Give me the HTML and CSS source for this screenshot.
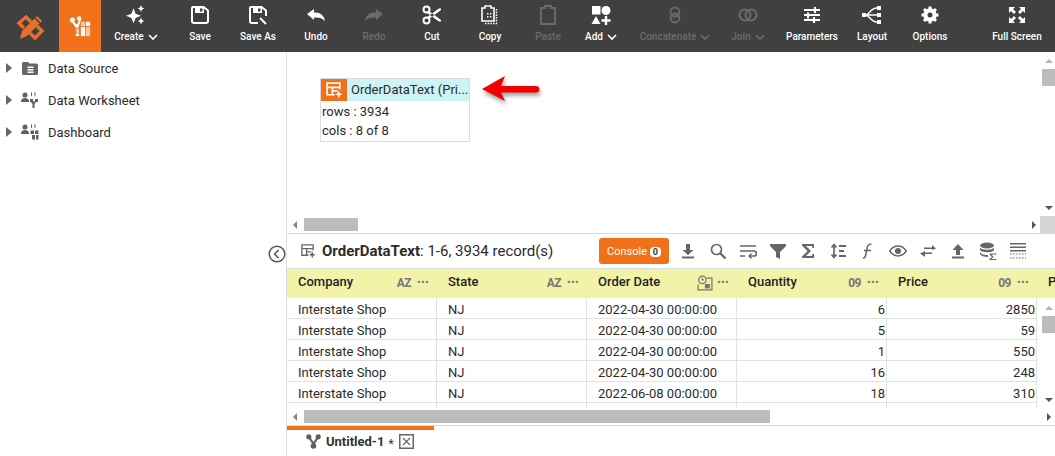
FILE: index.html
```html
<!DOCTYPE html>
<html lang="en">
<head>
    <meta charset="UTF-8">
    <title>Data Worksheet</title>
    <link rel="stylesheet" href="styles.css">
</head>
<body>
    <header class="topbar">
        <div class="logo">
            <svg width="38" height="38" viewBox="0 0 38 38"><g fill="none" stroke="#e8702a" stroke-width="3.4"><path d="M13 21l-5-5 7-6 5 5"/><path d="M19 26l5 5 7-7-5-5"/></g><path d="M9 32l2-8L26 9l5 5-15 15z" fill="#e8702a"/><path d="M24 11l5 5" stroke="#404040" stroke-width="1.5"/></svg>
        </div>
        <div class="tab-active">
            <svg width="22" height="22" viewBox="0 0 26 26"><g fill="#fff"><circle cx="4" cy="6" r="3"/><circle cx="12" cy="4" r="2.6"/><path d="M3 8l5 7h3l3-9-2-1-2 6H9L5 7z"/><rect x="8" y="16" width="4" height="5" fill="#f5c9a0"/><rect x="8" y="22" width="4" height="3"/><rect x="14" y="8" width="5" height="5" fill="#f5c9a0"/><rect x="20" y="8" width="5" height="5"/><rect x="14" y="14" width="5" height="11"/><rect x="20" y="14" width="5" height="11" fill="#f5c9a0"/></g></svg>
        </div>
        <div class="tool w70">
            <svg width="20" height="20" viewBox="0 0 24 24" fill="#fff"><path d="M9 4l2.500 6.500L18 13l-6.500 2.500L9 22l-2.500-6.500L0 13l6.500-2.500z"/><path d="M18 0l1.200 3 2.800 1.200-2.800 1.200L18 8.500l-1.200-3.100L14 4.200 16.800 3z"/><path d="M18 15l1.300 3 2.700 1.200-2.700 1.300-1.300 3-1.200-3-2.800-1.300 2.800-1.200z"/></svg>
            <span class="tool-label">Create <svg class="chev" width="10" height="7" viewBox="0 0 10 7"><path d="M1 1l4 4 4-4" fill="none" stroke="#fff" stroke-width="1.600"/></svg></span>
        </div>
        <div class="tool w58">
            <svg width="20" height="20" viewBox="0 0 20 20"><path d="M3 2h10.500L18 5.500V16a2 2 0 0 1-2 2H4a2 2 0 0 1-2-2V3a1 1 0 0 1 1-1z" fill="none" stroke="#fff" stroke-width="2"/><path d="M5 3h9v5H5z" fill="#fff"/><rect x="10" y="3.500" width="2.500" height="3" fill="#404040"/></svg>
            <span class="tool-label">Save</span>
        </div>
        <div class="tool w58">
            <svg width="20" height="20" viewBox="0 0 20 20"><path d="M10 18H4a2 2 0 0 1-2-2V3a1 1 0 0 1 1-1h10.500L18 5.500V11" fill="none" stroke="#fff" stroke-width="2"/><path d="M5 3h9v5H5z" fill="#fff"/><rect x="10" y="3.500" width="2.500" height="3" fill="#404040"/><path d="M12 13l6 6" stroke="#fff" stroke-width="2"/></svg>
            <span class="tool-label">Save As</span>
        </div>
        <div class="tool w58">
            <svg width="20" height="20" viewBox="0 0 20 20"><path d="M1 9l7-5v3.500c6-.5 10 2.500 11 8.500-3-3-6-4-11-3.500V15z" fill="#fff"/></svg>
            <span class="tool-label">Undo</span>
        </div>
        <div class="tool w58 off">
            <svg width="20" height="20" viewBox="0 0 20 20"><path d="M19 9l-7-5v3.500C6 7 2 10 1 16c3-3 6-4 11-3.500V15z" fill="#6b6b6b"/></svg>
            <span class="tool-label">Redo</span>
        </div>
        <div class="tool w58">
            <svg width="20" height="20" viewBox="0 0 20 20"><g fill="none" stroke="#fff" stroke-width="2"><circle cx="4.500" cy="4.500" r="3"/><circle cx="4.500" cy="15.500" r="3"/></g><path d="M7 6l12 9v1.500h-2L5 8zM7 14L19 5v-1.500h-2L5 12z" fill="#fff"/></svg>
            <span class="tool-label">Cut</span>
        </div>
        <div class="tool w58">
            <svg width="20" height="20" viewBox="0 0 20 20"><path d="M14 16H2V3h3V1h6v2h3z" fill="none" stroke="#fff" stroke-width="1.600"/><path d="M7 8h1.500v1.500H7zM10 8h1.500v1.500H10zM7 11h1.500v1.500H7zM10 11h1.500v1.500H10z" fill="#fff"/><path d="M16.500 4v14M5 18.500h12" stroke="#fff" stroke-width="1.500" stroke-dasharray="1.500 1.200"/></svg>
            <span class="tool-label">Copy</span>
        </div>
        <div class="tool w58 off">
            <svg width="20" height="20" viewBox="0 0 20 20"><path d="M17 19H3V3h4V1h6v2h4z" fill="none" stroke="#6b6b6b" stroke-width="1.800"/></svg>
            <span class="tool-label">Paste</span>
        </div>
        <div class="tool w48">
            <svg width="20" height="20" viewBox="0 0 20 20" fill="#fff"><rect x="1" y="1" width="8.500" height="8.500"/><circle cx="15" cy="5.500" r="4.500"/><path d="M5 11l4.500 8h-9z"/><path d="M13.800 11h2.400v3.300h3.300v2.400h-3.300V20h-2.400v-3.300h-3.300v-2.400h3.300z"/></svg>
            <span class="tool-label">Add <svg class="chev" width="10" height="7" viewBox="0 0 10 7"><path d="M1 1l4 4 4-4" fill="none" stroke="#fff" stroke-width="1.600"/></svg></span>
        </div>
        <div class="tool w100 off">
            <svg width="20" height="20" viewBox="0 0 20 20" fill="none" stroke="#6b6b6b" stroke-width="1.800"><circle cx="10" cy="7" r="4.500"/><circle cx="10" cy="13" r="4.500"/></svg>
            <span class="tool-label">Concatenate <svg class="chev" width="10" height="7" viewBox="0 0 10 7"><path d="M1 1l4 4 4-4" fill="none" stroke="#6b6b6b" stroke-width="1.600"/></svg></span>
        </div>
        <div class="tool w46 off">
            <svg width="20" height="20" viewBox="0 0 20 20" fill="none" stroke="#6b6b6b" stroke-width="2"><circle cx="7" cy="10" r="5.500"/><circle cx="13" cy="10" r="5.500"/></svg>
            <span class="tool-label">Join <svg class="chev" width="10" height="7" viewBox="0 0 10 7"><path d="M1 1l4 4 4-4" fill="none" stroke="#6b6b6b" stroke-width="1.600"/></svg></span>
        </div>
        <div class="tool w82">
            <svg width="20" height="20" viewBox="0 0 20 20"><path d="M2 5h16M2 10h16M2 15h16" stroke="#fff" stroke-width="1.800"/><path d="M13 2v6M6 7.500v6M12 12v6" stroke="#fff" stroke-width="2.200"/></svg>
            <span class="tool-label">Parameters</span>
        </div>
        <div class="tool w38">
            <svg width="20" height="20" viewBox="0 0 20 20"><g fill="#fff"><rect x="0" y="8" width="4" height="4"/><rect x="15" y="1" width="4" height="4"/><rect x="15" y="8" width="4" height="4"/><rect x="15" y="15" width="4" height="4"/></g><path d="M3 10c5 0 5-7 12-7M3 10h12M3 10c5 0 5 7 12 7" fill="none" stroke="#fff" stroke-width="1.400"/></svg>
            <span class="tool-label">Layout</span>
        </div>
        <div class="tool w78">
            <svg width="20" height="20" viewBox="0 0 20 20"><circle cx="10" cy="10" r="4.500" fill="none" stroke="#fff" stroke-width="4.500"/><path d="M10 1.500v17M1.500 10h17M4 4l12 12M16 4L4 16" stroke="#fff" stroke-width="3"/><circle cx="10" cy="10" r="2.500" fill="#404040"/></svg>
            <span class="tool-label">Options</span>
        </div>
        <div class="tool w76 full">
            <svg width="20" height="20" viewBox="0 0 20 20" fill="#fff"><path d="M2 2h6L6 4l3 3-2 2-3-3-2 2zM18 2v6l-2-2-3 3-2-2 3-3-2-2zM2 18v-6l2 2 3-3 2 2-3 3 2 2zM18 18h-6l2-2-3-3 2-2 3 3 2-2z"/></svg>
            <span class="tool-label">Full Screen</span>
        </div>
    </header>

    <div class="page">
        <aside class="sidebar">
            <div class="tree-row">
                <span class="caret"></span>
                <svg width="18" height="15" viewBox="0 0 18 15"><path d="M1 2.500A1.500 1.500 0 0 1 2.500 1H7l1.500 1.500h7A1.500 1.500 0 0 1 17 4v8.500a1.500 1.500 0 0 1-1.500 1.500h-13A1.500 1.500 0 0 1 1 12.500z" fill="#666"/><path d="M6.500 5.500h6v1.500h-6zM6.500 8h6v1.500h-6zM6.500 10.500h6V12h-6z" fill="#fff"/></svg>
                <span class="tree-label">Data Source</span>
            </div>
            <div class="tree-row">
                <span class="caret"></span>
                <svg width="18" height="16" viewBox="0 0 18 16" fill="#5f5f5f"><circle cx="4" cy="3" r="2.500"/><path d="M0 10c0-3 1.500-4 4-4s4 1 4 4z"/><path d="M10 0c1.500.5 1.500 4 0 4.500zM13.500 0c1.500.5 1.500 4 0 4.500z"/><path d="M9 7h3v2.500h2V7h3v3h-2l-1.500 2v4h-2v-4L10 10H9z"/></svg>
                <span class="tree-label">Data Worksheet</span>
            </div>
            <div class="tree-row">
                <span class="caret"></span>
                <svg width="18" height="16" viewBox="0 0 18 16" fill="#5f5f5f"><circle cx="4" cy="3" r="2.500"/><path d="M0 10c0-3 1.500-4 4-4s4 1 4 4z"/><path d="M10 0c1.500.5 1.500 4 0 4.500zM13.500 0c1.500.5 1.500 4 0 4.500z"/><path d="M9.500 6.500h3.500V10H9.500zM14 6.500h3.500V10H14zM11 11h3v4.500h-3zM15 11h2.500v4.500H15z"/></svg>
                <span class="tree-label">Dashboard</span>
            </div>
        </aside>

        <main class="main">
            <button class="collapse">
                <svg width="18" height="18" viewBox="0 0 18 18"><circle cx="9" cy="9" r="7.800" fill="#fff" stroke="#555" stroke-width="1.500"/><path d="M10.500 5L6.500 9l4 4" fill="none" stroke="#555" stroke-width="1.500"/></svg>
            </button>

            <section class="canvas">
                <div class="canvas-row">
                    <div class="canvas-area">
                        <div class="node">
                            <div class="node-head">
                                <span class="node-icon">
                                    <svg width="18" height="18" viewBox="0 0 17 17"><path d="M9 13H2V2h12v6" fill="none" stroke="#fff" stroke-width="1.500"/><path d="M2 6h12M7 6v7M7 9.500h5" stroke="#fff" stroke-width="1.500" fill="none"/><path d="M13 9l1 2.500 2.500 1-2.500 1-1 3-1-3-2.500-1 2.500-1z" fill="#fff"/></svg>
                                </span>
                                <span class="node-title">OrderDataText (Pri...</span>
                            </div>
                            <div class="node-lines">
                                <div class="node-line">rows : 3934</div>
                                <div class="node-line">cols : 8 of 8</div>
                            </div>
                        </div>
                        <svg class="red-arrow" width="66" height="32" viewBox="0 0 66 32">
                            <path d="M5 16L28 3l-4 10h35a3 3 0 0 1 0 6.500H24l4 8.500z" fill="#f20000"/>
                        </svg>
                    </div>
                    <div class="vbar">
                        <span class="arrow-up"></span>
                        <span class="vthumb thumb-top"></span>
                        <span class="vspace"></span>
                        <span class="arrow-down"></span>
                    </div>
                </div>
                <div class="hbar">
                    <span class="arrow-left"></span>
                    <span class="hthumb thumb-small"></span>
                    <span class="hspace"></span>
                    <span class="arrow-right"></span>
                    <span class="corner"></span>
                </div>
            </section>

            <section class="infobar">
                <svg class="info-icon" width="16" height="16" viewBox="0 0 17 17"><path d="M9 13H2V2h12v6" fill="none" stroke="#666" stroke-width="1.400"/><path d="M2 6h12M7 6v7M7 9.500h5" stroke="#666" stroke-width="1.400" fill="none"/><path d="M13 9l1 2.500 2.500 1-2.500 1-1 3-1-3-2.500-1 2.500-1z" fill="#666"/></svg>
                <span class="info-text"><b>OrderDataText</b>: 1-6, 3934 record(s)</span>
                <button class="console">Console <span class="console-count">0</span></button>
                <div class="actions">
                    <svg width="18" height="18" viewBox="0 0 18 18" fill="#666"><path d="M7 2h4v6h3.500L9 13 3.500 8H7z"/><rect x="3" y="14.500" width="12" height="2"/></svg>
                    <svg width="18" height="18" viewBox="0 0 18 18" fill="none" stroke="#666"><circle cx="7.500" cy="7.500" r="5" stroke-width="1.700"/><path d="M11 11l5.500 5.500" stroke-width="2.200"/></svg>
                    <svg width="18" height="18" viewBox="0 0 18 18" fill="none" stroke="#666" stroke-width="1.700"><path d="M1 4h16M1 9h14a2.500 2.500 0 0 1 0 5h-4M1 14h5"/><path d="M12.500 11.500L10 14l2.500 2.500" stroke-width="1.400"/></svg>
                    <svg width="18" height="18" viewBox="0 0 18 18" fill="#666"><path d="M1 2h16v2l-6 6v7l-4-2v-5L1 4z"/></svg>
                    <svg width="18" height="18" viewBox="0 0 18 18" fill="#666"><path d="M3 2h12v4h-1.500l-.5-2H7l5 5-5 5h6l.5-2H15v4H3v-1.500L8.500 9 3 3.500z"/></svg>
                    <svg width="18" height="18" viewBox="0 0 18 18" fill="none" stroke="#666" stroke-width="1.700"><path d="M5 3v12M2.500 5.500L5 2.500l2.500 3M2.500 12.500l2.500 3 2.500-3"/><path d="M10 4h7M10 9h5M10 14h7" stroke-width="1.900"/></svg>
                    <svg width="18" height="18" viewBox="0 0 18 18" fill="none" stroke="#666" stroke-width="1.500"><path d="M4 16c2.500 0 2.500-1.500 3.500-7s1.500-7 5-7M5 8.500h7"/></svg>
                    <svg width="18" height="18" viewBox="0 0 18 18"><path d="M0.800 9C3 5.500 6 4 9 4s6 1.500 8.200 5C15 12.500 12 14 9 14S3 12.500.800 9z" fill="none" stroke="#666" stroke-width="1.500"/><circle cx="9" cy="9" r="3" fill="#666"/></svg>
                    <svg width="18" height="18" viewBox="0 0 18 18" fill="#666"><path d="M5 5.500h8V3l4 3.500-4 1.500V7H5zM13 10.500H6V9L1 11.500 6 15v-3h7z"/></svg>
                    <svg width="18" height="18" viewBox="0 0 18 18" fill="#666"><path d="M9 2l5.500 6H11v5H7V8H3.500z"/><rect x="3" y="14.500" width="12" height="2"/></svg>
                    <svg width="18" height="18" viewBox="0 0 18 18" fill="#666"><ellipse cx="8" cy="3.500" rx="7" ry="3"/><path d="M1 5.500c1 3 13 3 14 0v2.500c-1 3-13 3-14 0zM1 10c1 2.500 5 3 8 3v2c-4 0-7-1-8-3z"/><path d="M10.500 11.500h7v1h-5l2 2.500-2 2h5v1h-7v-1l2.500-2-2.500-2.500z"/></svg>
                    <svg width="18" height="18" viewBox="0 0 18 18" fill="#666"><path d="M1 1h16v1.500H1zM1 4.500h16V6H1zM1 8h16v1.500H1z"/><path d="M1 12h16M1 16h16" stroke="#666" stroke-dasharray="1.500 1.500" fill="none"/></svg>
                </div>
            </section>

            <section class="grid">
                <div class="grid-head">
                    <div class="hcell"><span class="hname">Company</span><span class="htype">AZ</span><span class="dots">•••</span></div>
                    <div class="hcell"><span class="hname">State</span><span class="htype">AZ</span><span class="dots">•••</span></div>
                    <div class="hcell"><span class="hname">Order Date</span>
                        <svg class="htype-icon" width="16" height="16" viewBox="0 0 15 15" fill="none" stroke="#777" stroke-width="1.200"><circle cx="5" cy="4.500" r="3.500"/><path d="M5 2.500v2h1.500M9 3h5v11H1V9"/><rect x="8" y="9" width="3.500" height="3" fill="#777"/></svg>
                        <span class="dots">•••</span></div>
                    <div class="hcell"><span class="hname">Quantity</span><span class="htype">09</span><span class="dots">•••</span></div>
                    <div class="hcell"><span class="hname">Price</span><span class="htype">09</span><span class="dots">•••</span></div>
                    <div class="hcell hcell-cut"><span class="hname">P</span></div>
                </div>
                <div class="grid-body">
                    <div class="rows">
                        <div class="row"><div class="cell">Interstate Shop</div><div class="cell">NJ</div><div class="cell">2022-04-30 00:00:00</div><div class="cell num">6</div><div class="cell num">2850</div></div>
                        <div class="row"><div class="cell">Interstate Shop</div><div class="cell">NJ</div><div class="cell">2022-04-30 00:00:00</div><div class="cell num">5</div><div class="cell num">59</div></div>
                        <div class="row"><div class="cell">Interstate Shop</div><div class="cell">NJ</div><div class="cell">2022-04-30 00:00:00</div><div class="cell num">1</div><div class="cell num">550</div></div>
                        <div class="row"><div class="cell">Interstate Shop</div><div class="cell">NJ</div><div class="cell">2022-04-30 00:00:00</div><div class="cell num">16</div><div class="cell num">248</div></div>
                        <div class="row"><div class="cell">Interstate Shop</div><div class="cell">NJ</div><div class="cell">2022-06-08 00:00:00</div><div class="cell num">18</div><div class="cell num">310</div></div>
                        <div class="row"><div class="cell"></div><div class="cell"></div><div class="cell"></div><div class="cell num"></div><div class="cell num"></div></div>
                    </div>
                    <div class="vbar vbar-grid">
                        <span class="arrow-up"></span>
                        <span class="vthumb thumb-grid"></span>
                        <span class="vspace"></span>
                        <span class="arrow-down"></span>
                    </div>
                </div>
                <div class="hbar hbar-grid">
                    <span class="arrow-left"></span>
                    <span class="hthumb thumb-wide"></span>
                    <span class="hspace"></span>
                    <span class="arrow-right"></span>
                </div>
            </section>

            <section class="tabs">
                <div class="tab">
                    <svg width="15" height="15" viewBox="0 0 15 15" fill="#5f5f5f"><circle cx="2.800" cy="2.800" r="2.600"/><circle cx="12.200" cy="2.800" r="2.600"/><circle cx="7.500" cy="12" r="2.800"/><path d="M3 3l4.500 7L12 3" fill="none" stroke="#5f5f5f" stroke-width="2.200"/></svg>
                    <span class="tab-name">Untitled-1</span>
                    <span class="tab-star">*</span>
                    <svg class="tab-close" width="15" height="15" viewBox="0 0 15 15" fill="none" stroke="#666"><rect x=".75" y=".75" width="13.500" height="13.500" stroke-width="1.500"/><path d="M4 4l7 7M11 4l-7 7" stroke-width="1.200"/></svg>
                </div>
            </section>
        </main>
    </div>
</body>
</html>
```

FILE: styles.css
```css
html, body{
    margin: 0;
    height: 100%;
    overflow: hidden;
}
body{
    display: flex;
    flex-direction: column;
    font: 13px Roboto, "Liberation Sans", sans-serif;
    color: #2b2b2b;
    background-color: white;
}
button{
    border: none;
    padding: 0;
    background: none;
}

/* top toolbar */
.topbar{
    display: flex;
    flex: none;
    height: 52px;
    background-color: #404040;
}
.logo{
    display: flex;
    align-items: center;
    justify-content: center;
    width: 59px;
}
.tab-active{
    display: flex;
    align-items: center;
    justify-content: center;
    width: 42px;
    background-color: #f0711a;
}
.tool{
    display: flex;
    flex: none;
    flex-direction: column;
    align-items: center;
    padding-top: 5px;
    box-sizing: border-box;
    color: white;
}
.tool.off{
    color: #6b6b6b;
}
.tool.full{
    margin-left: 10px;
}
.tool-label{
    display: flex;
    align-items: center;
    gap: 4px;
    margin-top: 6px;
    font-size: 10px;
    font-weight: 500;
    line-height: 12px;
    white-space: nowrap;
}
.w38{ width: 38px; }
.w46{ width: 46px; }
.w48{ width: 48px; }
.w58{ width: 58px; }
.w70{ width: 70px; }
.w76{ width: 76px; }
.w78{ width: 78px; }
.w82{ width: 82px; }
.w100{ width: 100px; }

/* layout */
.page{
    display: flex;
    flex: 1;
    min-height: 0;
}
.sidebar{
    flex: none;
    width: 286px;
    border-right: 1px solid #dcdcdc;
}
.tree-row{
    display: flex;
    align-items: center;
    height: 32px;
    padding-left: 6px;
}
.caret{
    width: 0;
    height: 0;
    margin-right: 9px;
    border-left: 6px solid #666;
    border-top: 5px solid transparent;
    border-bottom: 5px solid transparent;
}
.tree-label{
    margin-left: 9px;
}
.main{
    position: relative;
    flex: 1;
    min-width: 0;
}
.collapse{
    position: absolute;
    left: -19px;
    top: 193px;
    width: 18px;
    height: 18px;
}

/* canvas */
.canvas{
    height: 181px;
    border-bottom: 1px solid #dcdcdc;
}
.canvas-row{
    display: flex;
    height: 164px;
}
.canvas-area{
    position: relative;
    flex: 1;
}
.node{
    position: absolute;
    left: 33px;
    top: 26px;
    width: 148px;
    height: 62px;
    border: 1px solid #dcdcdc;
}
.node-head{
    display: flex;
    height: 22px;
    background-color: #cdf3f5;
}
.node-icon{
    display: flex;
    align-items: center;
    justify-content: center;
    width: 26px;
    background-color: #f0711a;
}
.node-title{
    margin-left: 4px;
    line-height: 22px;
    white-space: nowrap;
}
.node-lines{
    padding-top: 1px;
}
.node-line{
    padding-left: 1px;
    line-height: 19px;
}
.red-arrow{
    position: absolute;
    left: 190px;
    top: 21px;
    filter: drop-shadow(1px 3px 2px rgba(0,0,0,.4));
}

/* scrollbars */
.vbar{
    display: flex;
    flex: none;
    flex-direction: column;
    align-items: center;
    width: 13px;
}
.vthumb{
    flex: none;
    width: 13px;
    background-color: #bcbcbc;
}
.vspace, .hspace{
    flex: 1;
}
.thumb-top{
    height: 17px;
    margin-top: 6px;
}
.arrow-up, .arrow-down{
    flex: none;
    width: 0;
    height: 0;
    border-left: 4px solid transparent;
    border-right: 4px solid transparent;
}
.arrow-up{
    margin-top: 7px;
    border-bottom: 4px solid #b5b5b5;
}
.arrow-down{
    margin-bottom: 6px;
    border-top: 4px solid #555;
}
.hbar{
    display: flex;
    align-items: center;
    height: 17px;
}
.arrow-left, .arrow-right{
    flex: none;
    width: 0;
    height: 0;
    border-top: 4px solid transparent;
    border-bottom: 4px solid transparent;
}
.arrow-left{
    margin-left: 6px;
    border-right: 4px solid #888;
}
.arrow-right{
    border-left: 4px solid #555;
}
.hthumb{
    flex: none;
    height: 13px;
    margin-left: 7px;
    background-color: #bcbcbc;
}
.thumb-small{
    width: 54px;
}
.thumb-wide{
    width: 466px;
}
.corner{
    flex: none;
    width: 15px;
    height: 17px;
    margin-left: 4px;
    background-color: #d5d5d5;
}

/* record bar */
.infobar{
    display: flex;
    align-items: center;
    height: 34px;
    border-bottom: 1px solid #dcdcdc;
}
.info-icon{
    margin-left: 13px;
}
.info-text{
    margin-left: 6px;
    width: 277px;
    font-size: 15px;
    white-space: nowrap;
}
.console{
    flex: none;
    width: 70px;
    height: 26px;
    border-radius: 3px;
    background-color: #f0711a;
    color: white;
    font: 11px Roboto, sans-serif;
}
.console-count{
    padding: 0 3px;
    border-radius: 4px;
    background-color: white;
    color: #333;
    font-size: 9px;
    font-weight: 700;
}
.actions{
    display: flex;
    gap: 12px;
    margin-left: 10px;
}

/* data table */
.grid-head{
    display: flex;
    height: 29px;
    overflow: hidden;
    background-color: #f2f2a9;
}
.hcell{
    display: flex;
    flex: none;
    align-items: center;
    width: 150px;
    box-sizing: border-box;
    padding: 0 5px 5px 11px;
}
.hcell-cut{
    width: 20px;
}
.hname{
    flex: 1;
    font-weight: 500;
    font-size: 13px;
    color: #222;
}
.htype{
    margin-right: 6px;
    padding-top: 3px;
    font-size: 12px;
    font-weight: 700;
    letter-spacing: -0.5px;
    color: #777;
}
.htype-icon{
    margin: 3px 4px 0 0;
}
.dots{
    width: 15px;
    padding-top: 3px;
    font-size: 11px;
    line-height: 10px;
    letter-spacing: 0.3px;
    color: #777;
    white-space: nowrap;
}
.grid-body{
    display: flex;
    height: 110px;
    overflow: hidden;
}
.rows{
    flex: 1;
}
.row{
    display: flex;
    height: 21px;
    width: 750px;
}
.cell{
    flex: none;
    width: 137px;
    height: 20px;
    padding: 0 1px 0 11px;
    line-height: 24px;
    border-right: 1px solid #e2e2e2;
    border-bottom: 1px solid #e2e2e2;
    white-space: nowrap;
}
.num{
    text-align: right;
}
.vbar-grid{
    margin-left: auto;
}
.vbar-grid .arrow-up{
    margin-top: 8px;
}
.thumb-grid{
    height: 17px;
    margin-top: 6px;
}
.hbar-grid{
    justify-content: flex-start;
    padding-right: 4px;
    border-bottom: 1px solid #dcdcdc;
}

/* bottom tabs */
.tabs{
    display: flex;
}
.tab{
    display: flex;
    align-items: center;
    width: 128px;
    height: 22px;
    padding-left: 19px;
    border-top: 4px solid #f0711a;
}
.tab-name{
    margin-left: 5px;
    font-weight: 700;
    color: #333;
}
.tab-star{
    margin: 5px 0 0 4px;
    font-size: 12px;
    color: #333;
}
.tab-close{
    margin-left: 5px;
}
```
